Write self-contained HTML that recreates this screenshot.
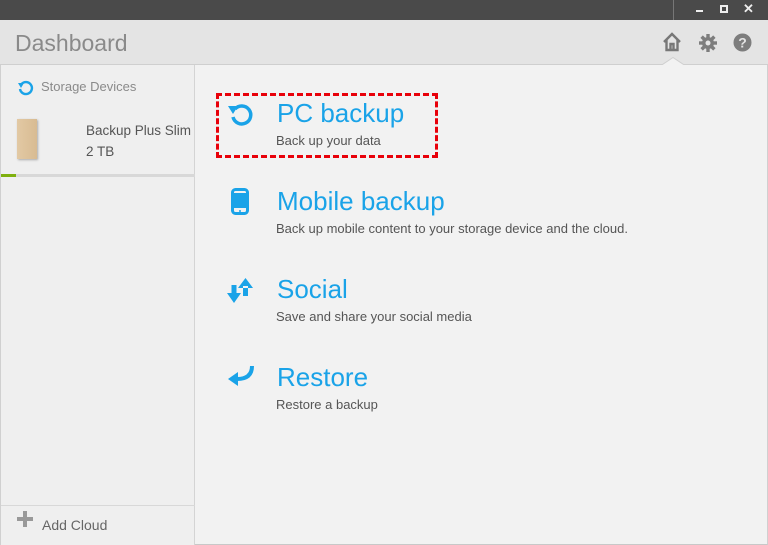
<!DOCTYPE html>
<html><head><meta charset="utf-8"><style>
*{margin:0;padding:0;box-sizing:border-box}
body{width:768px;height:545px;overflow:hidden;background:#f2f2f2;font-family:"Liberation Sans",sans-serif;position:relative}
.tb{position:absolute;left:0;top:0;width:768px;height:20px;background:#4a4a4a}
.hd{position:absolute;left:0;top:20px;width:768px;height:45px;background:#e4e4e4;border-bottom:1px solid #cfcfcf}
.hd h1{position:absolute;left:15px;top:10px;font-weight:normal;font-size:23px;color:#8a8a8a}
.sb{position:absolute;left:0;top:65px;width:195px;height:480px;background:#efefef;border-right:1px solid #d4d4d4;border-left:1px solid #d0d0d0}
.main{position:absolute;left:195px;top:65px;right:0;bottom:0;background:#f2f2f2;border-right:1px solid #d0d0d0;border-bottom:1px solid #c8c8c8}
.t{position:absolute;left:277px;font-size:26px;color:#1aa3e8;line-height:30px}
.s{position:absolute;left:276px;font-size:13px;color:#555}
.ic{position:absolute;left:226px}
</style></head><body>
<div class="tb">
<div style="position:absolute;left:673px;top:0;width:1px;height:20px;background:#777"></div>
<div style="position:absolute;left:696px;top:10px;width:7px;height:2px;background:#eee"></div>
<div style="position:absolute;left:720px;top:5px;width:8px;height:8px;border:2px solid #eee"></div>
<div style="position:absolute;left:743px;top:1px;color:#eee;font-size:13px;font-weight:bold">✕</div>
</div>
<div class="hd"><h1>Dashboard</h1>
<svg style="position:absolute;left:662px;top:12px" width="20" height="20" viewBox="0 0 20 20"><path d="M2 10 L10 2 L18 10 M4.5 8 V18 H15.5 V8 M8.5 18 V12 H11.5 V18" fill="none" stroke="#777" stroke-width="2.4"/></svg>
<svg style="position:absolute;left:698px;top:13px" width="20" height="20" viewBox="0 0 20 20"><g fill="#7d7d7d"><circle cx="10" cy="10" r="6"/><rect x="8.3" y="1" width="3.4" height="18"/><rect x="1" y="8.3" width="18" height="3.4"/><rect x="8.3" y="1" width="3.4" height="18" transform="rotate(45 10 10)"/><rect x="8.3" y="1" width="3.4" height="18" transform="rotate(-45 10 10)"/></g><circle cx="10" cy="10" r="2.5" fill="#e4e4e4"/></svg>
<svg style="position:absolute;left:733px;top:13px" width="19" height="19" viewBox="0 0 19 19"><circle cx="9.5" cy="9.5" r="9" fill="#7d7d7d"/><text x="9.5" y="14.5" text-anchor="middle" font-family="Liberation Sans" font-weight="bold" font-size="14" fill="#e4e4e4">?</text></svg>
<svg style="position:absolute;left:661px;top:37px" width="24" height="9"><path d="M0 8.5 L12 0.5 L24 8.5" fill="#f2f2f2" stroke="#cfcfcf"/></svg>
</div>
<div class="sb">
<svg style="position:absolute;left:16px;top:14px" width="18" height="18" viewBox="0 0 18 18"><path d="M4.5 5 A6 6 0 1 1 3 10" fill="none" stroke="#1aa3e8" stroke-width="2.4"/><path d="M1 4 L7 4 L4 9 Z" fill="#1aa3e8"/></svg>
<div style="position:absolute;left:40px;top:14px;font-size:13px;color:#8a8a8a">Storage Devices</div>
<div style="position:absolute;left:16px;top:54px;width:20px;height:40px;background:linear-gradient(90deg,#e2c9a4,#d8bb92);box-shadow:1px 1px 2px #aaa"></div>
<div style="position:absolute;left:85px;top:55px;font-size:13.5px;color:#555;line-height:21px">Backup Plus Slim<br>2 TB</div>
<div style="position:absolute;left:0;top:109px;width:194px;height:3px;background:#d8d8d8"></div>
<div style="position:absolute;left:0;top:109px;width:15px;height:3px;background:#7fb00f"></div>
<div style="position:absolute;left:0;top:440px;width:194px;height:1px;background:#d8d8d8"></div>
<div style="position:absolute;left:16px;top:452px;width:16px;height:4px;background:#999"></div>
<div style="position:absolute;left:22px;top:446px;width:4px;height:16px;background:#999"></div>
<div style="position:absolute;left:41px;top:452px;font-size:14px;color:#666">Add Cloud</div>
</div>
<div class="main"></div>
<div style="position:absolute;left:216px;top:93px;width:222px;height:65px;border:3px dashed #e8000a"></div>
<svg class="ic" style="top:101px" width="28" height="28" viewBox="0 0 28 28"><path d="M9 8 A9 9 0 1 1 7 16" fill="none" stroke="#1aa3e8" stroke-width="3.5"/><path d="M2 5 L12 5 L7 13 Z" fill="#1aa3e8"/></svg>
<div class="t" style="top:98px">PC backup</div><div class="s" style="top:133px">Back up your data</div>
<svg class="ic" style="top:188px;left:231px" width="18" height="28" viewBox="0 0 18 28"><rect x="1.5" y="1.5" width="15" height="24" rx="3" fill="none" stroke="#1aa3e8" stroke-width="3"/><rect x="3" y="5" width="12" height="15" fill="#1aa3e8"/><circle cx="9" cy="23" r="1" fill="#1aa3e8"/></svg>
<div class="t" style="top:186px">Mobile backup</div><div class="s" style="top:221px">Back up mobile content to your storage device and the cloud.</div>
<svg class="ic" style="top:276px" width="30" height="30" viewBox="0 0 30 30"><path d="M1 17 H15 L8 27 Z M5.5 9 H10.5 V19 H5.5 Z" fill="#1aa3e8"/><path d="M12 12 H27 L19.5 2 Z M17 10 H22 V20 H17 Z" fill="#1aa3e8"/></svg>
<div class="t" style="top:274px">Social</div><div class="s" style="top:309px">Save and share your social media</div>
<svg class="ic" style="top:364px" width="30" height="28" viewBox="0 0 30 28"><path d="M26 2 Q26 15 11 15" fill="none" stroke="#1aa3e8" stroke-width="4"/><path d="M2 15 L12 8 L12 22 Z" fill="#1aa3e8"/></svg>
<div class="t" style="top:362px">Restore</div><div class="s" style="top:397px">Restore a backup</div>
</body></html>
